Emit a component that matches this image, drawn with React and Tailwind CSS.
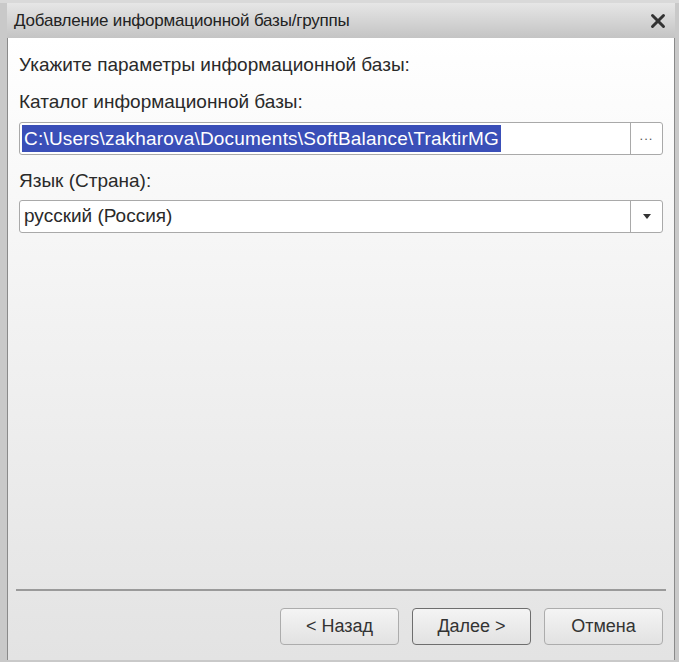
import { X } from "lucide-react";

function Field({ children, button }) {
  return (
    <div className="flex h-[33px] rounded-[3px] border border-[#a9a9a9] bg-white">
      <div className="flex flex-1 items-center pl-[2px]">{children}</div>
      <div className="flex w-[32px] items-center justify-center border-l border-[#a9a9a9]">{button}</div>
    </div>
  );
}

function Btn({ children, focused }) {
  return (
    <div
      className={
        "flex h-[37px] w-[119px] items-center justify-center rounded-[4px] border bg-gradient-to-b from-[#f4f4f4] to-[#e2e2e2] text-[18px] text-[#333] " +
        (focused ? "border-[#6e6e6e]" : "border-[#acacac]")
      }
    >
      {children}
    </div>
  );
}

export default function App() {
  return (
    <div className="h-[662px] w-[679px] bg-[#d9d9d9] pt-[3px] font-['Liberation_Sans',Arial,sans-serif]">
      <div className="flex h-[659px] flex-col border-l-[7px] border-r-[4px] border-b-[2px] border-[#c9c9c9]">
        <div className="flex h-[35px] items-center justify-between bg-gradient-to-b from-[#e6e6e6] to-[#c4c4c4] pl-[7px] pr-[6px]">
          <span className="text-[17px] tracking-[-0.2px] text-[#222]">Добавление информационной базы/группы</span>
          <X className="h-[22px] w-[22px] text-[#333]" strokeWidth={3.2} />
        </div>
        <div className="flex flex-1 flex-col border-x border-[#8a8a8a] bg-gradient-to-b from-white to-[#e3e3e3] px-[11px] pt-[17px] pb-[15px] text-[19px] text-[#2a2a2a]">
          <div className="leading-[20px]">Укажите параметры информационной базы:</div>
          <div className="mt-[17px] leading-[20px]">Каталог информационной базы:</div>
          <div className="mt-[10px]">
            <Field button={<span className="pb-[6px] text-[13px] tracking-[1px] text-[#555]">...</span>}>
              <span className="bg-[#3a4fb8] px-[2px] leading-[27px] tracking-[0.2px] text-white">C:\Users\zakharova\Documents\SoftBalance\TraktirMG</span>
            </Field>
          </div>
          <div className="mt-[16px] leading-[20px]">Язык (Страна):</div>
          <div className="mt-[9px]">
            <Field button={<svg width="8" height="5" viewBox="0 0 8 5"><path d="M0 0h8L4 5z" fill="#333" /></svg>}>
              <span className="pl-[2px]">русский (Россия)</span>
            </Field>
          </div>
          <div className="flex-1" />
          <div className="mx-[-3px] border-t-2 border-[#9a9a9a]" />
          <div className="mt-[17px] flex justify-end gap-[13px]">
            <Btn>&lt; Назад</Btn>
            <Btn focused>Далее &gt;</Btn>
            <Btn>Отмена</Btn>
          </div>
        </div>
      </div>
    </div>
  );
}
